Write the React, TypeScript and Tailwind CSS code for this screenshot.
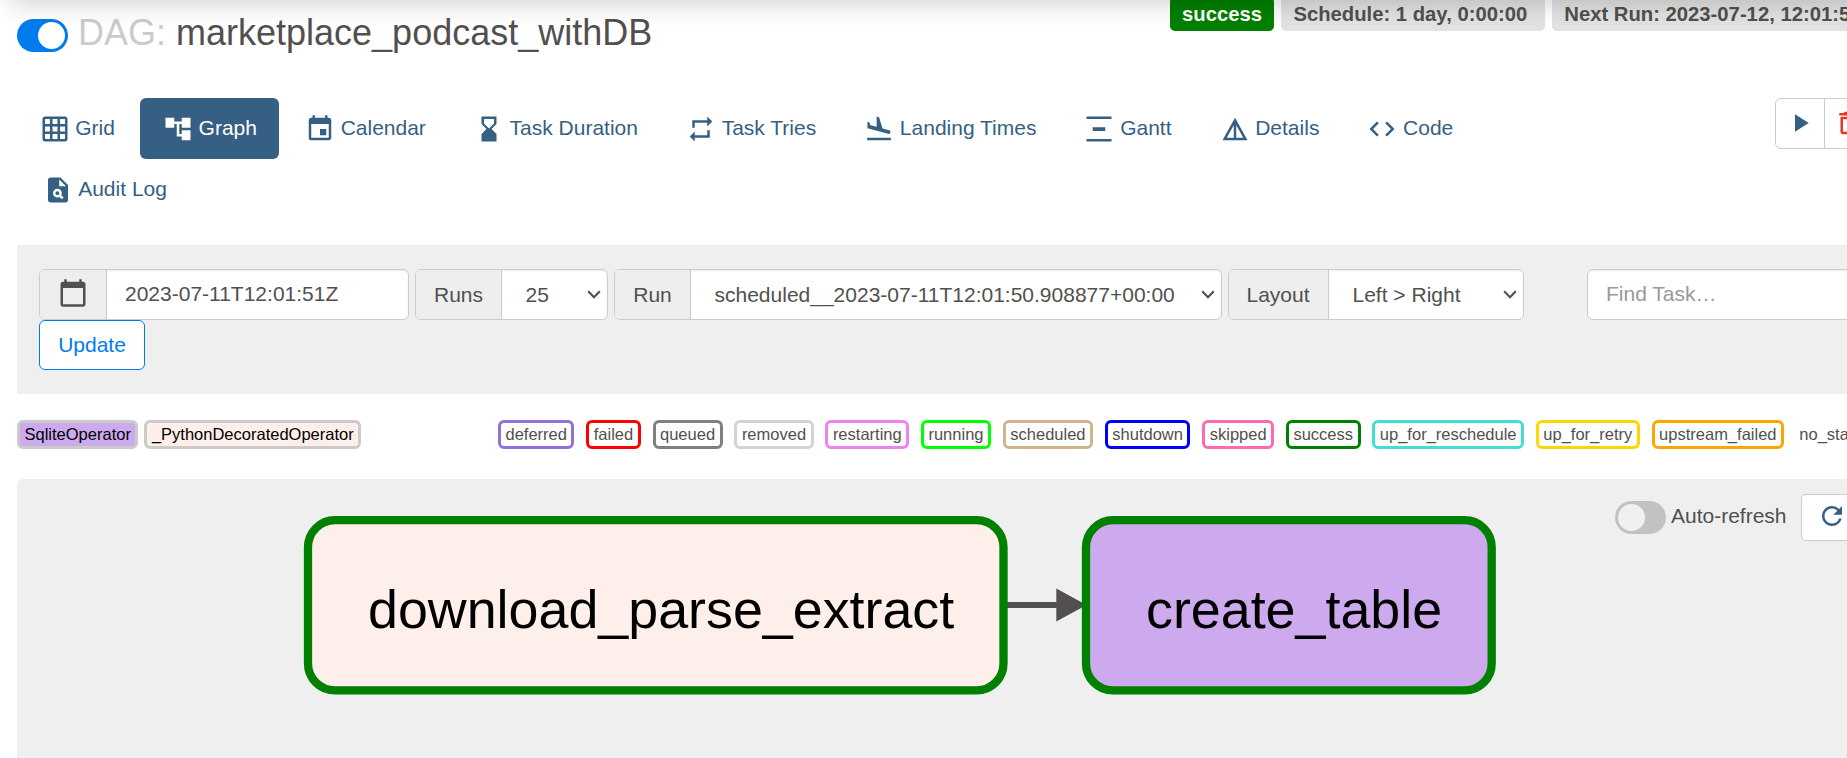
import type { ReactNode } from "react";
import {
  MdAccountTree,
  MdCalendarToday,
  MdCode,
  MdDeleteOutline,
  MdEvent,
  MdFlightLand,
  MdGridOn,
  MdHourglassBottom,
  MdPlagiarism,
  MdPlayArrow,
  MdRefresh,
  MdRepeat,
  MdVerticalDistribute,
} from "react-icons/md";

function DetailsIcon() {
  return (
    <svg viewBox="0 0 24 24" width="30" height="30" fill="currentColor">
      <path d="M12 3L2 21h20L12 3zm1 5.92L18.6 19H13V8.92zm-2 0V19H5.4L11 8.92z" />
    </svg>
  );
}

const tabs: { label: string; icon: ReactNode; active?: boolean }[] = [
  { label: "Graph", icon: <MdAccountTree size={30} />, active: true },
  { label: "Calendar", icon: <MdEvent size={30} /> },
  { label: "Task Duration", icon: <MdHourglassBottom size={30} /> },
  { label: "Task Tries", icon: <MdRepeat size={30} /> },
  { label: "Landing Times", icon: <MdFlightLand size={30} /> },
  { label: "Gantt", icon: <MdVerticalDistribute size={30} /> },
  { label: "Details", icon: <DetailsIcon /> },
  { label: "Code", icon: <MdCode size={30} /> },
  { label: "Audit Log", icon: <MdPlagiarism size={30} /> },
];

function Tab({ label, icon, active, first }: { label: string; icon: ReactNode; active?: boolean; first?: boolean }) {
  return (
    <a
      className={`flex h-[61px] items-center gap-[5.7px] rounded-[6px] px-[22.5px] whitespace-nowrap ${first ? "" : "ml-[3px]"} ${
        active ? "bg-[#355f83] text-white" : "text-[#355f83]"
      }`}
    >
      {icon}
      <span className="pb-[2px]">{label}</span>
    </a>
  );
}

function Chevron() {
  return (
    <svg className="shrink-0" width="14" height="9" viewBox="0 0 14 9" fill="none" stroke="#51504f" strokeWidth="2.1">
      <path d="M1.2 1.2L7 7.2L12.8 1.2" />
    </svg>
  );
}

function SelectGroup({ label, value, group, addon }: { label: string; value: string; group: string; addon: string }) {
  return (
    <div className={`flex h-[51px] shrink-0 overflow-hidden rounded-[6px] border border-[#ccc] bg-white ${group}`}>
      <div className={`flex shrink-0 items-center justify-center border-r border-[#ccc] bg-[#eeeeee] ${addon}`}>{label}</div>
      <div className="flex flex-1 items-center justify-between pr-[6px] pl-[23.5px] whitespace-nowrap shadow-[inset_0_1px_2px_rgba(0,0,0,0.08)]">
        <span>{value}</span>
        <Chevron />
      </div>
    </div>
  );
}

const states = [
  { name: "deferred", border: "border-[#9370db]" },
  { name: "failed", border: "border-[#ff0000]" },
  { name: "queued", border: "border-[#808080]" },
  { name: "removed", border: "border-[#d3d3d3]" },
  { name: "restarting", border: "border-[#ee82ee]" },
  { name: "running", border: "border-[#00ff00]" },
  { name: "scheduled", border: "border-[#d2b48c]" },
  { name: "shutdown", border: "border-[#0000ff]" },
  { name: "skipped", border: "border-[#ff69b4]" },
  { name: "success", border: "border-[#008000]" },
  { name: "up_for_reschedule", border: "border-[#40e0d0]" },
  { name: "up_for_retry", border: "border-[#ffd700]" },
  { name: "upstream_failed", border: "border-[#ffa500]" },
  { name: "no_status", border: "border-white -ml-[4px]" },
];

function Legend({ children, className }: { children: ReactNode; className: string }) {
  return (
    <span className={`flex h-[29px] shrink-0 items-center rounded-[6px] border-[3px] px-[4.5px] pb-[2px] text-[16.5px] leading-[20px] whitespace-nowrap ${className}`}>
      {children}
    </span>
  );
}

function Badge({ children, className }: { children: ReactNode; className: string }) {
  return (
    <span className={`h-[34px] shrink-0 rounded-[5px] px-[12px] pt-[2px] text-[20.25px] leading-[30px] font-bold whitespace-pre ${className}`}>
      {children}
    </span>
  );
}

export default function App() {
  return (
    <div className="relative h-[758px] w-full overflow-hidden bg-white font-['Liberation_Sans',Arial,sans-serif] text-[21px] leading-[30px] text-[#51504f]">
      <div className="absolute top-[-60px] right-[-40px] left-[10px] z-10 h-[60px] shadow-[0_3px_27px_rgba(0,0,0,0.2)]" />

      <header className="flex h-[98px] items-start pl-[17px]">
        <div className="mt-[19px] flex h-[33px] w-[51px] shrink-0 justify-end rounded-full bg-[#017cee] p-[3px]">
          <div className="size-[27px] rounded-full bg-white" />
        </div>
        <h1 className="mt-[13px] ml-[10px] w-[1092px] shrink-0 text-[36px] leading-[40px] whitespace-nowrap">
          <span className="text-[#cbcbcb]">DAG:</span> marketplace_podcast_withDB
        </h1>
        <div className="mt-[-3px] flex shrink-0 gap-[7.5px]">
          <Badge className="bg-[#008000] text-white">success</Badge>
          <Badge className="bg-[#e2e2e2]">{"Schedule: 1 day, 0:00:00 "}</Badge>
          <Badge className="bg-[#e2e2e2]">Next Run: 2023-07-12, 12:01:50</Badge>
        </div>
      </header>

      <div className="flex h-[147px] items-start pl-[17px]">
        <nav className="flex w-[1560px] shrink-0 flex-wrap">
          <Tab label="Grid" icon={<MdGridOn size={30} />} first />
          {tabs.slice(0, 8).map((tab) => (
            <Tab key={tab.label} {...tab} />
          ))}
          <div className="basis-full" />
          <Tab {...tabs[8]} />
        </nav>
        <div className="ml-[198px] flex h-[51px] w-[99px] shrink-0 rounded-[6px] border border-[#ccc]">
          <div className="flex w-[49px] items-start border-r border-[#ccc] pt-[9px] pl-[9px] text-[#355f83]">
            <MdPlayArrow size={30} className="shrink-0" />
          </div>
          <div className="flex items-start pt-[9px] pl-[8px] text-[#e43921]">
            <MdDeleteOutline size={30} className="shrink-0" />
          </div>
        </div>
      </div>

      <section className="ml-[17px] h-[149px] w-[1900px] bg-[#efefef] pt-[24px] pl-[22px]">
        <div className="flex">
          <div className="flex h-[51px] w-[370px] shrink-0 overflow-hidden rounded-[6px] border border-[#ccc] bg-white">
            <div className="flex w-[67px] items-center justify-center border-r border-[#ccc] bg-[#eeeeee]">
              <MdCalendarToday size={30} className="mb-[3px]" />
            </div>
            <div className="flex flex-1 items-center pb-[2px] pl-[18px] shadow-[inset_0_1px_2px_rgba(0,0,0,0.08)]">2023-07-11T12:01:51Z</div>
          </div>
          <SelectGroup label="Runs" value="25" group="ml-[6px] w-[193px]" addon="w-[86px]" />
          <SelectGroup label="Run" value="scheduled__2023-07-11T12:01:50.908877+00:00" group="ml-[6px] w-[608px]" addon="w-[76px]" />
          <SelectGroup label="Layout" value="Left > Right" group="ml-[6px] w-[296px]" addon="w-[100px] pr-px" />
          <div className="ml-[63px] flex h-[51px] w-[310px] shrink-0 items-center rounded-[6px] border border-[#ccc] bg-white pb-[2px] pl-[18px] text-[#999] shadow-[inset_0_1px_2px_rgba(0,0,0,0.08)]">
            Find Task…
          </div>
        </div>
        <button className="flex h-[50px] w-[106px] items-center justify-center rounded-[6px] border border-[#017cee] bg-white pb-px text-[#017cee]">
          Update
        </button>
      </section>

      <section className="flex h-[85px] items-start pt-[26px] pl-[17px]">
        <div className="flex w-[481px] shrink-0 gap-[6px] text-black">
          <Legend className="border-[#cbcbcb] bg-[#cdaaed]">SqliteOperator</Legend>
          <Legend className="border-[#cbcbcb] bg-[#ffefeb]">_PythonDecoratedOperator</Legend>
        </div>
        <div className="flex shrink-0 gap-[11.8px]">
          {states.map((state) => (
            <Legend key={state.name} className={state.border}>
              {state.name}
            </Legend>
          ))}
        </div>
      </section>

      <section className="relative ml-[17px] h-[300px] w-[1900px] rounded-[6px] bg-[#efefef]">
        <svg className="absolute top-0 left-0" width="1600" height="279" viewBox="17 479 1600 279">
          <path d="M1004 605H1058" stroke="#51504f" strokeWidth="6" />
          <path d="M1056.3 588.5L1086.5 605L1056.3 621.5Z" fill="#51504f" />
          <rect x="308" y="520.2" width="695.5" height="170.2" rx="27" fill="#ffefeb" stroke="#008000" strokeWidth="8.3" />
          <rect x="1086" y="520.2" width="405.7" height="170.2" rx="27" fill="#cdaaed" stroke="#008000" strokeWidth="8.3" />
          <g fill="#000" fontSize="53.8" fontFamily="Liberation Sans, Arial, sans-serif">
            <text x="368" y="628.4">download_parse_extract</text>
            <text x="1146" y="628.4">create_table</text>
          </g>
        </svg>
        <div className="flex items-start pt-[15px] pl-[1598px]">
          <div className="mt-[7px] h-[33px] w-[51px] shrink-0 rounded-full bg-[#c4c2c1] p-[3px]">
            <div className="size-[27px] rounded-full bg-[#f0f0f0]" />
          </div>
          <span className="mt-[7px] ml-[5px] w-[130px] shrink-0">Auto-refresh</span>
          <div className="flex h-[47px] w-[63px] shrink-0 items-start rounded-[5px] border border-[#ccc] bg-white pt-[6px] pl-[15px] text-[#355f83]">
            <MdRefresh size={30} />
          </div>
        </div>
      </section>
    </div>
  );
}
